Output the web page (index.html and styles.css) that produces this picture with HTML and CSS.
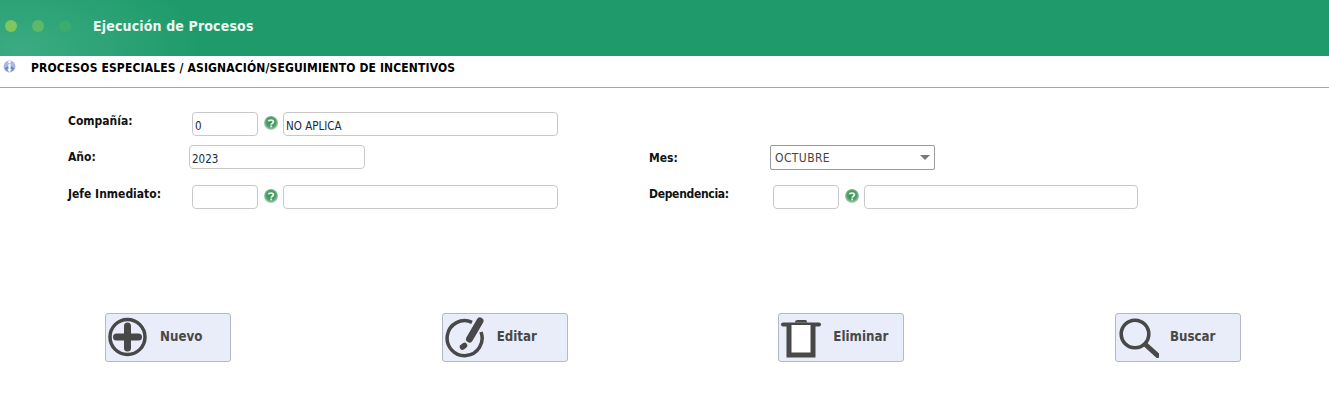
FILE: index.html
```html
<!DOCTYPE html>
<html lang="es">
<head>
<meta charset="utf-8">
<title>Ejecución de Procesos</title>
<link rel="stylesheet" href="styles.css">
</head>
<body>
<header class="topbar">
  <span class="dot dot-1"></span><span class="dot dot-2"></span><span class="dot dot-3"></span>
  <h1 class="app-title">Ejecución de Procesos</h1>
</header>
<div class="crumb">
  <svg class="crumb-icon" viewBox="0 0 12 12" aria-hidden="true">
    <circle cx="6" cy="6" r="5.5" fill="#a9b9de"/>
    <path d="M1.5 7.5A5 5 0 0 0 10.5 7.5L8 6 4 6Z" fill="#6d86bf"/>
    <rect x="5" y="1" width="2" height="2" fill="#fff"/>
    <path d="M5 4h2v4.5h1.2L6 11 3.800 8.500H5Z" fill="#fff"/>
  </svg>
  <span class="crumb-text">PROCESOS ESPECIALES / ASIGNACIÓN/SEGUIMIENTO DE INCENTIVOS</span>
</div>
<form class="form">
  <label class="label label-top">Compañía:</label>
  <div class="combo">
    <input class="input code" type="text" value="0">
    <svg class="help" viewBox="0 0 14 14" aria-hidden="true"><use href="#help"/></svg>
    <input class="input name" type="text" value="NO APLICA">
  </div>
  <span></span><span></span>

  <label class="label label-mid">Año:</label>
  <input class="input year" type="text" value="2023">
  <label class="label label-mid label-mes">Mes:</label>
  <div class="select"><span>OCTUBRE</span><i class="caret"></i></div>

  <label class="label label-top">Jefe Inmediato:</label>
  <div class="combo">
    <input class="input code" type="text">
    <svg class="help" viewBox="0 0 14 14" aria-hidden="true"><use href="#help"/></svg>
    <input class="input name" type="text">
  </div>
  <label class="label label-top label-dep">Dependencia:</label>
  <div class="combo">
    <input class="input code" type="text">
    <svg class="help" viewBox="0 0 14 14" aria-hidden="true"><use href="#help"/></svg>
    <input class="input name name-short" type="text">
  </div>
</form>
<div class="actions">
  <button class="btn" type="button">
    <svg class="btn-icon" viewBox="0 0 42 42" aria-hidden="true">
      <circle cx="20.500" cy="21" r="17.500" fill="none" stroke="#484848" stroke-width="3.500"/>
      <path d="M20.500 10v22M9.500 21h22" stroke="#484848" stroke-width="7" stroke-linecap="round"/>
    </svg>
    <span>Nuevo</span>
  </button>
  <button class="btn" type="button">
    <svg class="btn-icon" viewBox="0 0 42 42" aria-hidden="true">
      <path d="M28 6.300A17.500 17.500 0 1 0 37 16" fill="none" stroke="#484848" stroke-width="3.500"/>
      <path d="M36 5 25.500 23" stroke="#484848" stroke-width="7" stroke-linecap="round"/>
      <path d="M20.500 29.500 18.500 31" stroke="#484848" stroke-width="5.500" stroke-linecap="round"/>
    </svg>
    <span>Editar</span>
  </button>
  <button class="btn" type="button">
    <svg class="btn-icon" viewBox="0 0 42 42" aria-hidden="true">
      <path d="M3 8.500H39" stroke="#484848" stroke-width="4" stroke-linecap="round"/>
      <path d="M15 6.500C15 4 17 4 19 4h5c2 0 3 0 3 2.500" fill="#484848"/>
      <path d="M9 9V39H33V9" fill="#fff" stroke="#484848" stroke-width="5"/>
    </svg>
    <span>Eliminar</span>
  </button>
  <button class="btn" type="button">
    <svg class="btn-icon" viewBox="0 0 42 42" aria-hidden="true">
      <circle cx="18" cy="18" r="13.800" fill="none" stroke="#484848" stroke-width="3.600"/>
      <path d="M29 29 40.500 39.500" stroke="#484848" stroke-width="5" stroke-linecap="round"/>
    </svg>
    <span>Buscar</span>
  </button>
</div>
<svg class="defs" aria-hidden="true">
  <defs>
    <radialGradient id="helpBg" cx="50%" cy="45%" r="62%">
      <stop offset="0" stop-color="#2f8f50"/><stop offset=".55" stop-color="#4f9e6b"/><stop offset="1" stop-color="#dcebe1"/>
    </radialGradient>
    <symbol id="help" viewBox="0 0 14 14">
      <circle cx="7" cy="7" r="7" fill="url(#helpBg)"/>
      <path d="M4.600 5.400C4.800 3.700 9.400 3.500 9.400 5.800 9.400 7.200 7.200 7.200 7.200 8.700" fill="none" stroke="#eaf5ee" stroke-width="1.800"/>
      <rect x="6.300" y="9.500" width="1.800" height="1.800" fill="#eaf5ee"/>
    </symbol>
  </defs>
</svg>
</body>
</html>
```
FILE: styles.css
```css
* { box-sizing: border-box; }
html, body { margin: 0; padding: 0; }
body {
  background: #fff;
  color: #000;
  font-family: "DejaVu Sans", sans-serif;
  font-stretch: condensed;
  overflow: hidden;
}
.defs { position: absolute; width: 0; height: 0; }

.topbar {
  height: 56px;
  display: flex;
  align-items: center;
  padding: 0 0 4px 5px;
  background:
    radial-gradient(ellipse 180px 90px at 20px 50px, #3bab82 0%, rgba(59,171,130,0) 100%),
    #1f9b6b;
}
.dot { width: 12px; height: 12px; border-radius: 50%; margin-right: 15px; }
.dot-1 { background: #80c65f; }
.dot-2 { background: #5cb967; }
.dot-3 { background: #3bab6e; margin-right: 0; }
.app-title {
  margin: 0 0 0 22px;
  font-size: 14px;
  font-weight: 700;
  letter-spacing: .15px;
  color: #eef8f3;
}

.crumb {
  height: 32px;
  display: flex;
  align-items: flex-start;
  border-bottom: 1px solid #a4a4a4;
  padding-left: 3px;
}
.crumb-icon { width: 13px; height: 13px; margin-top: 4px; }
.crumb-text {
  margin: 5px 0 0 15px;
  font-size: 12px;
  font-weight: 700;
  letter-spacing: .14px;
  line-height: 14px;
  white-space: nowrap;
}

.form {
  display: grid;
  grid-template-columns: 121px 460px 121px 1fr;
  grid-template-rows: 33px 40px 24px;
  padding: 24px 0 0 68px;
}
.label { font-size: 12px; font-weight: 700; line-height: 14px; white-space: nowrap; color: #111; }
.label-top { padding-top: 2px; }
.label-mid { padding-top: 5px; }
.label-mes { padding-top: 6px; }
.label-dep { letter-spacing: -.3px; }

.combo { display: flex; align-items: flex-start; padding-left: 3px; }
.input {
  height: 24px;
  border: 1px solid #c8c8c8;
  border-radius: 4px;
  background: #fff;
  padding: 3px 2px 0;
  font: inherit;
  font-size: 11.500px;
  color: #1a2a3a;
  outline: none;
}
.code { width: 66px; }
.name { width: 275px; }
.name-short { width: 274px; }
.year { width: 176px; }
.help { width: 14px; height: 14px; margin: 4px 5px 0 6px; flex: none; }

.select {
  width: 165px;
  height: 25px;
  border: 1px solid #9a9a9a;
  border-radius: 2px;
  display: flex;
  align-items: center;
  justify-content: space-between;
  padding: 0 4px;
  font-size: 12px;
  letter-spacing: .4px;
  color: #444;
}
.caret {
  width: 0; height: 0;
  border-left: 5px solid transparent;
  border-right: 5px solid transparent;
  border-top: 5px solid #777;
}

.actions {
  display: flex;
  justify-content: space-between;
  padding: 104px 88px 0 105px;
}
.btn {
  width: 126px;
  height: 49px;
  display: flex;
  align-items: center;
  gap: 11px;
  padding: 0 0 2px 1px;
  background: #e8edf9;
  border: 1px solid #b4b8c2;
  border-radius: 3px;
  font: inherit;
  font-size: 13.200px;
  font-weight: 700;
  color: #484848;
}
.btn-icon { width: 42px; height: 42px; flex: none; }
```
